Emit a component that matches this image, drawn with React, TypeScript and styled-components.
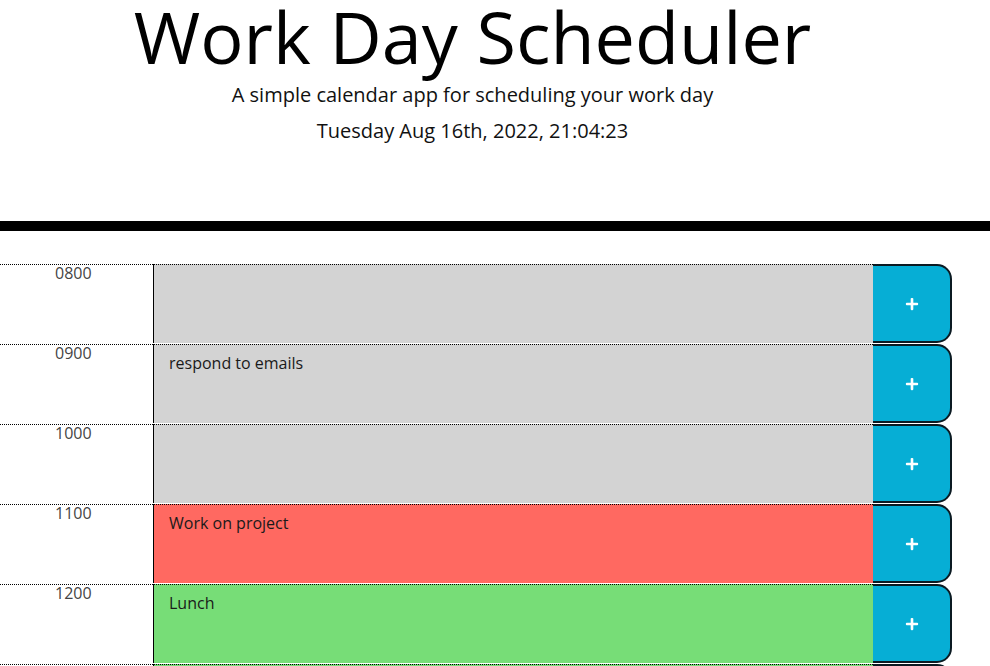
import React from "react";
import styled, { createGlobalStyle } from "styled-components";
import { FaPlus } from "react-icons/fa";

const Global = createGlobalStyle`
  html, body { margin: 0; padding: 0; background: #ffffff; }
  body { font-family: "Open Sans", "Liberation Sans", sans-serif; color: #212529; }
`;

const Header = styled.header`
  text-align: center;
  padding: 0 45px 75px 0;
  border-bottom: 10px solid #000000;
  margin-bottom: 33px;
`;

const Title = styled.h1`
  margin: -4px 0 0;
  font-size: 72px;
  font-weight: 400;
  line-height: 80px;
  color: #000;
`;

const Lead = styled.p<{ $top: number }>`
  margin: ${(p) => p.$top}px 0 0;
  font-size: 20px;
  font-weight: 400;
  line-height: 30px;
  color: #111;
`;

const Schedule = styled.main`
  display: flex;
  flex-direction: column;
`;

const Row = styled.div`
  display: grid;
  grid-template-columns: 153px 720px 79px;
  height: 80px;
`;

const Hour = styled.div`
  border-top: 1px dotted #000;
  padding: 0 0 0 55px;
  font-size: 16px;
  line-height: 17px;
  color: #444;
`;

type Tense = "past" | "present" | "future";
const tenseColor: Record<Tense, string> = {
  past: "#d3d3d3",
  present: "#ff6961",
  future: "#77dd77",
};

const Description = styled.div<{ $tense: Tense }>`
  box-sizing: border-box;
  height: 79px;
  border-top: 1px dotted #000;
  border-left: 1px solid #000;
  background: ${(p) => tenseColor[p.$tense]};
  padding: 6px 15px;
  font-size: 16px;
  line-height: 24px;
  color: #1a1a1a;
`;

const SaveBtn = styled.button`
  box-sizing: border-box;
  height: 79px;
  background: #06aed5;
  border: 2px solid #0b1a22;
  border-left: none;
  border-radius: 0 15px 15px 0;
  color: #ffffff;
  display: flex;
  align-items: center;
  justify-content: center;
  padding: 0;
  cursor: pointer;
`;

const rows: { hour: string; text: string; tense: Tense }[] = [
  { hour: "0800", text: "", tense: "past" },
  { hour: "0900", text: "respond to emails", tense: "past" },
  { hour: "1000", text: "", tense: "past" },
  { hour: "1100", text: "Work on project", tense: "present" },
  { hour: "1200", text: "Lunch", tense: "future" },
  { hour: "1300", text: "", tense: "future" },
  { hour: "1400", text: "", tense: "future" },
  { hour: "1500", text: "", tense: "future" },
  { hour: "1600", text: "", tense: "future" },
  { hour: "1700", text: "", tense: "future" },
];

export default function App() {
  return (
    <>
      <Global />
      <Header>
        <Title>Work Day Scheduler</Title>
        <Lead $top={4}>A simple calendar app for scheduling your work day</Lead>
        <Lead $top={6}>Tuesday Aug 16th, 2022, 21:04:23</Lead>
      </Header>
      <Schedule>
        {rows.map((r) => (
          <Row key={r.hour}>
            <Hour>{r.hour}</Hour>
            <Description $tense={r.tense}>{r.text}</Description>
            <SaveBtn aria-label="save">
              <FaPlus size={14} />
            </SaveBtn>
          </Row>
        ))}
      </Schedule>
    </>
  );
}
